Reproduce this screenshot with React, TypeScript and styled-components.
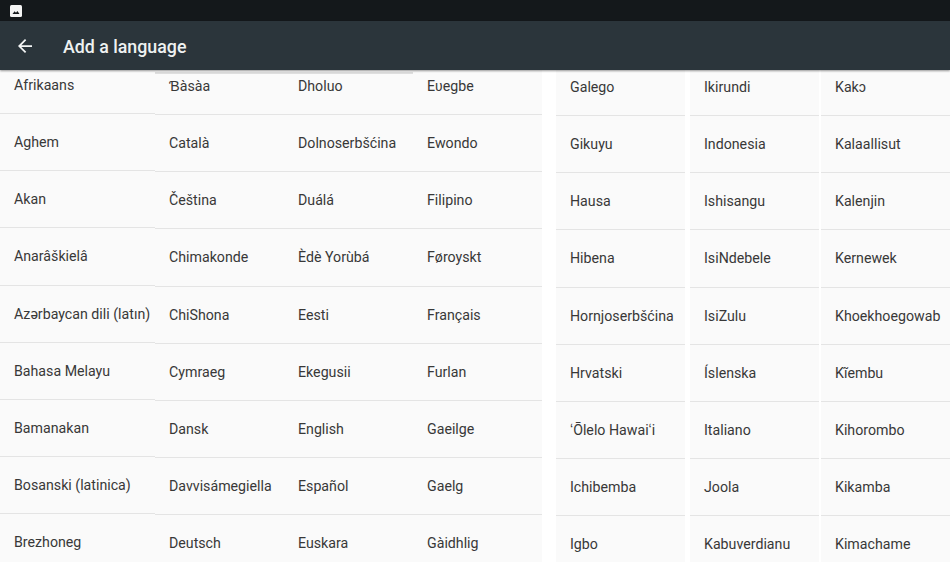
import React from "react";
import styled, { createGlobalStyle } from "styled-components";

const GlobalStyle = createGlobalStyle`
  html, body {
    margin: 0;
    padding: 0;
    background: #ffffff;
  }
  body {
    font-family: Roboto, "Liberation Sans", sans-serif;
  }
`;

interface ColumnData {
  width: number;
  gapBefore: number;
  padding: number;
  items: string[];
}

interface GroupData {
  width: number;
  offset: number;
  columns: ColumnData[];
}

const groups: GroupData[] = [
  {
    width: 542,
    offset: 0,
    columns: [
      {
        width: 155,
        gapBefore: 0,
        padding: 14,
        items: [
          "Afrikaans",
          "Aghem",
          "Akan",
          "Anarâškielâ",
          "Azərbaycan dili (latın)",
          "Bahasa Melayu",
          "Bamanakan",
          "Bosanski (latinica)",
          "Brezhoneg",
        ],
      },
      {
        width: 130,
        gapBefore: 0,
        padding: 14,
        items: [
          "Ɓàsàa",
          "Català",
          "Čeština",
          "Chimakonde",
          "ChiShona",
          "Cymraeg",
          "Dansk",
          "Davvisámegiella",
          "Deutsch",
        ],
      },
      {
        width: 129,
        gapBefore: 0,
        padding: 13,
        items: [
          "Dholuo",
          "Dolnoserbšćina",
          "Duálá",
          "Èdè Yorùbá",
          "Eesti",
          "Ekegusii",
          "English",
          "Español",
          "Euskara",
        ],
      },
      {
        width: 128,
        gapBefore: 0,
        padding: 13,
        items: [
          "Eʋegbe",
          "Ewondo",
          "Filipino",
          "Føroyskt",
          "Français",
          "Furlan",
          "Gaeilge",
          "Gaelg",
          "Gàidhlig",
        ],
      },
    ],
  },
  {
    width: 394,
    offset: 14,
    columns: [
      {
        width: 129,
        gapBefore: 0,
        padding: 14,
        items: [
          "Galego",
          "Gikuyu",
          "Hausa",
          "Hibena",
          "Hornjoserbšćina",
          "Hrvatski",
          "ʻŌlelo Hawaiʻi",
          "Ichibemba",
          "Igbo",
        ],
      },
      {
        width: 129,
        gapBefore: 5,
        padding: 14,
        items: [
          "Ikirundi",
          "Indonesia",
          "Ishisangu",
          "IsiNdebele",
          "IsiZulu",
          "Íslenska",
          "Italiano",
          "Joola",
          "Kabuverdianu",
        ],
      },
      {
        width: 129,
        gapBefore: 2,
        padding: 14,
        items: [
          "Kakɔ",
          "Kalaallisut",
          "Kalenjin",
          "Kernewek",
          "Khoekhoegowab",
          "Kĩembu",
          "Kihorombo",
          "Kikamba",
          "Kimachame",
        ],
      },
    ],
  },
];

const Screen = styled.div`
  width: 950px;
  height: 562px;
  display: flex;
  flex-direction: column;
  overflow: hidden;
  background: #ffffff;
`;

const StatusBar = styled.div`
  height: 21px;
  flex: none;
  display: flex;
  align-items: center;
  padding-left: 10px;
  background: #14181b;
`;

const Toolbar = styled.header`
  height: 49px;
  flex: none;
  display: flex;
  align-items: center;
  padding-left: 18px;
  background: #2b353b;
  box-shadow: 0 1px 2px rgba(0, 0, 0, 0.4);
  position: relative;
  z-index: 1;
`;

const BackIcon = styled.svg`
  width: 14px;
  height: 14px;
  fill: #f4f6f6;
  flex: none;
`;

const Title = styled.h1`
  margin: 2px 0 0 31px;
  font-size: 17.8px;
  font-weight: 500;
  color: #eef1f1;
`;

const Lists = styled.main`
  flex: 1;
  display: flex;
  overflow: hidden;
  position: relative;
`;

const ScrollEdge = styled.div`
  position: absolute;
  top: 2px;
  left: 155px;
  width: 258px;
  height: 2px;
  background: #dedede;
`;

const Group = styled.section<{ $width: number; $offset: number }>`
  width: ${(p) => p.$width}px;
  margin-left: ${(p) => p.$offset}px;
  display: flex;
  flex: none;
`;

const Column = styled.ul<{ $width: number; $scroll: number; $gapBefore: number }>`
  width: ${(p) => p.$width}px;
  margin: ${(p) => p.$scroll}px 0 0 ${(p) => p.$gapBefore}px;
  padding: 0;
  list-style: none;
  flex: none;
`;

const Row = styled.li<{ $padding: number }>`
  height: 56.14px;
  display: flex;
  align-items: center;
  padding-left: ${(p) => p.$padding}px;
  background: #fafafa;
  border-bottom: 1px solid #e4e4e4;
  font-size: 14.2px;
  color: #383838;
  white-space: nowrap;
`;

function rowScroll(groupIndex: number, columnIndex: number) {
  if (groupIndex === 1) return -11;
  return columnIndex === 0 ? -13 : -12;
}

export default function App() {
  return (
    <>
      <GlobalStyle />
      <Screen>
        <StatusBar>
          <svg width="12" height="12" viewBox="0 0 12 12">
            <rect width="12" height="12" rx="1.5" fill="#f4f4f4" />
            <path d="M2.5 9 4.6 6.2 6 7.8 7.4 6 9.5 9z" fill="#14181b" />
          </svg>
        </StatusBar>
        <Toolbar>
          <BackIcon viewBox="4 4 16 16">
            <path d="M20 11H7.83l5.59-5.59L12 4l-8 8 8 8 1.41-1.41L7.83 13H20v-2z" />
          </BackIcon>
          <Title>Add a language</Title>
        </Toolbar>
        <Lists>
          {groups.map((group, g) => (
            <Group key={g} $width={group.width} $offset={group.offset}>
              {group.columns.map((column, c) => (
                <Column
                  key={c}
                  $width={column.width}
                  $gapBefore={column.gapBefore}
                  $scroll={rowScroll(g, c)}
                >
                  {column.items.map((item) => (
                    <Row key={item} $padding={column.padding}>
                      {item}
                    </Row>
                  ))}
                </Column>
              ))}
            </Group>
          ))}
          <ScrollEdge />
        </Lists>
      </Screen>
    </>
  );
}
